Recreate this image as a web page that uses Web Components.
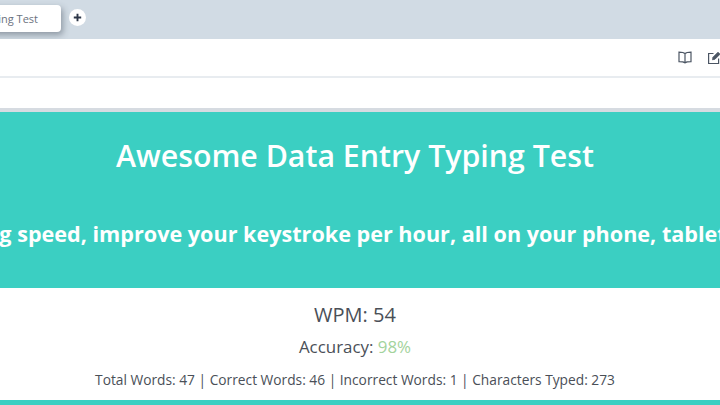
<!DOCTYPE html>
<html>
<head>
<meta charset="utf-8">
<title>Typing Test</title>
<style>
  html, body { margin: 0; height: 405px; overflow: hidden; background: #fff; font-family: "Open Sans", sans-serif; }
  body { display: flex; flex-direction: column; }
</style>
</head>
<body>
<tab-strip label="Data Entry Typing Test"></tab-strip>
<tool-bar></tool-bar>
<address-row></address-row>
<hero-banner heading="Awesome Data Entry Typing Test" tagline="Test your typing speed, improve your keystroke per hour, all on your phone, tablet or computer"></hero-banner>
<test-stats wpm="54" accuracy="98%" total="47" correct="46" incorrect="1" chars="273"></test-stats>
<div style="height:5px;background:#3bcfc2;flex:none"></div>
<script>
class TabStrip extends HTMLElement {
  constructor() {
    super();
    this.attachShadow({ mode: 'open' });
    this.shadowRoot.innerHTML = `
      <style>
        :host { display: flex; align-items: flex-start; height: 39px; flex: none; background: #d1dbe4; overflow: hidden; }
        .tab { flex: none; width: 160px; height: 27px; margin: 5px 0 0 -99px; box-sizing: border-box; padding-right: 23px;
          display: flex; align-items: center; justify-content: flex-end;
          background: #fff; border-radius: 4px; box-shadow: 2px 3px 6px rgba(60,70,85,.45);
          font: 11px "Open Sans", sans-serif; color: #6b7280; white-space: nowrap; }
        .add { flex: none; width: 17px; height: 17px; margin: 9px 0 0 8px; border-radius: 50%; background: #fff;
          display: flex; align-items: center; justify-content: center; }
      </style>
      <div class="tab">${this.getAttribute('label')}</div>
      <div class="add"><svg width="9" height="9" viewBox="0 0 9 9"><path d="M4.5 .8v7.4M.8 4.5h7.4" stroke="#2d3748" stroke-width="1.9" fill="none"/></svg></div>`;
  }
}
class ToolBar extends HTMLElement {
  constructor() {
    super();
    this.attachShadow({ mode: 'open' });
    this.shadowRoot.innerHTML = `
      <style>
        :host { display: flex; justify-content: flex-end; align-items: center; gap: 15px; height: 37px; flex: none;
          background: #fff; border-bottom: 2px solid #e8ecf0; overflow: hidden; }
        svg { flex: none; }
        svg.edit { margin-right: -1px; }
      </style>
      <svg width="14" height="13" viewBox="0 0 14 13" fill="none" stroke="#4b5563" stroke-width="1.2">
        <path d="M7 2.6C6 1.6 4 1.2 1 1.2v9.4c3 0 5 .3 6 1.3 1-1 3-1.3 6-1.3V1.2c-3 0-5 .4-6 1.4zM7 2.6v9.3"/>
      </svg>
      <svg class="edit" width="14" height="14" viewBox="0 0 14 14" fill="none" stroke="#4b5563" stroke-width="1.2">
        <path d="M6.5 2.5H1.6v10h10V7.5"/>
        <path d="M5.5 8.8l.5-2.6 5-5 2 2-5 5z" fill="#4b5563" stroke-width=".8"/>
      </svg>`;
  }
}
class AddressRow extends HTMLElement {
  constructor() {
    super();
    this.attachShadow({ mode: 'open' });
    this.shadowRoot.innerHTML = `
      <style>
        :host { display: block; height: 30px; flex: none; background: #fff; border-bottom: 4px solid #d6dbe1; }
      </style>`;
  }
}
class HeroBanner extends HTMLElement {
  constructor() {
    super();
    this.attachShadow({ mode: 'open' });
    this.shadowRoot.innerHTML = `
      <style>
        :host { display: flex; flex-direction: column; align-items: center; height: 176px; flex: none; padding-right: 10px; background: #3bcfc2;
          color: #fff; overflow: hidden; font-family: "Open Sans", sans-serif; font-weight: 600; white-space: nowrap; }
        h1 { margin: 23px 0 0; font: inherit; font-size: 30.3px; line-height: 42px; }
        h2 { margin: 41px 0 0 -163px; align-self: flex-start; font: inherit; font-weight: 700; font-size: 21.6px; line-height: 32px; flex: none; }
      </style>
      <h1>${this.getAttribute('heading')}</h1>
      <h2>${this.getAttribute('tagline')}</h2>`;
  }
}
class TestStats extends HTMLElement {
  constructor() {
    super();
    this.attachShadow({ mode: 'open' });
    const a = n => this.getAttribute(n);
    this.shadowRoot.innerHTML = `
      <style>
        :host { display: flex; flex-direction: column; align-items: center; height: 112px; flex: none; padding-right: 10px; background: #fff;
          font-family: "Open Sans", sans-serif; color: #4a4f57; white-space: nowrap; }
        .wpm { margin-top: 15px; font-size: 20px; line-height: 24px; }
        .acc { margin-top: 10px; font-size: 16.9px; line-height: 20px; }
        .acc b { font-weight: 400; color: #a3d39c; }
        .totals { margin-top: 14px; font-size: 13.75px; line-height: 18px; }
      </style>
      <div class="wpm">WPM: ${a('wpm')}</div>
      <div class="acc">Accuracy: <b>${a('accuracy')}</b></div>
      <div class="totals">Total Words: ${a('total')} | Correct Words: ${a('correct')} | Incorrect Words: ${a('incorrect')} | Characters Typed: ${a('chars')}</div>`;
  }
}
customElements.define('tab-strip', TabStrip);
customElements.define('tool-bar', ToolBar);
customElements.define('address-row', AddressRow);
customElements.define('hero-banner', HeroBanner);
customElements.define('test-stats', TestStats);
</script>
</body>
</html>
